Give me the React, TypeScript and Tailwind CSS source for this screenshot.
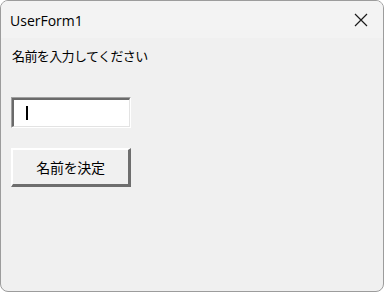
export default function App() {
  return (
    <div className="w-[384px] h-[292px] bg-white">
      <div
        className="w-[384px] h-[292px] rounded-[8px] border border-[#9c9c9c] bg-[#f0f0f0] overflow-hidden flex flex-col"
        style={{ fontFamily: '"Noto Sans CJK JP", "Noto Sans", sans-serif' }}
      >
        {/* title bar */}
        <div className="h-[37px] shrink-0 bg-[#f3f3f3] flex items-center justify-between pl-[9px] pr-[15px]">
          <span className="text-[14px] text-black leading-none pt-[2px]" style={{ fontFamily: '"Open Sans", "Noto Sans", sans-serif' }}>
            UserForm1
          </span>
          <svg width="14" height="14" viewBox="0 0 14 14" className="mt-[1px]">
            <path d="M1 1 L13 13 M13 1 L1 13" stroke="#1a1a1a" strokeWidth="1.2" />
          </svg>
        </div>

        {/* client area */}
        <div className="flex flex-col pl-[10px] pt-[9px]">
          <div className="text-[13px] leading-[18px] text-black tracking-[-0.6px] pl-[1px]">
            名前を入力してください
          </div>

          <div className="mt-[32px] w-[120px] h-[31px] border-t border-l border-t-[#a0a0a0] border-l-[#a0a0a0] border-r border-b border-r-white border-b-white">
            <div className="w-full h-full border-t-2 border-l-2 border-t-[#6a6a6a] border-l-[#6a6a6a] border-r border-b border-r-[#e3e3e3] border-b-[#e3e3e3] bg-white flex items-center pl-[12px]">
              <div className="w-[1.5px] h-[14px] bg-black" />
            </div>
          </div>

          <button className="mt-[20px] w-[120px] h-[39px] bg-[#f0f0f0] border-t-2 border-l-2 border-t-white border-l-white border-r-[3px] border-b-[3px] border-r-[#6e6e6e] border-b-[#6e6e6e] flex items-center justify-center text-[14px] text-black tracking-[-0.3px]">
            名前を決定
          </button>
        </div>
      </div>
    </div>
  );
}
